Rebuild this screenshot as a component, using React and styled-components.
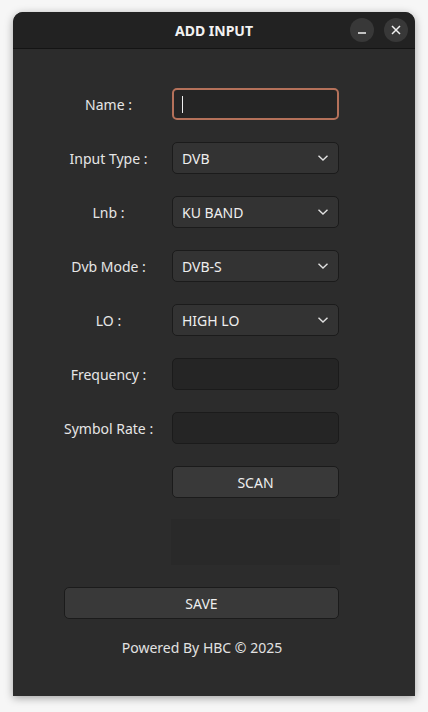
import React from "react";
import styled, { createGlobalStyle } from "styled-components";

const Global = createGlobalStyle`
  html, body {
    margin: 0;
    background: #f6f6f6;
    font-family: "Noto Sans", "Open Sans", sans-serif;
  }
`;

const Page = styled.div`
  padding: 12px 13px 16px 13px;
`;

const Window = styled.div`
  width: 402px;
  height: 684px;
  background: #2c2c2c;
  border-radius: 10px 10px 0 0;
  box-shadow: 0 2px 8px rgba(0, 0, 0, 0.35);
  display: flex;
  flex-direction: column;
  overflow: hidden;
`;

const TitleBar = styled.div`
  height: 36px;
  background: #222222;
  border-bottom: 1px solid #141414;
  display: grid;
  grid-template-columns: 1fr auto 1fr;
  align-items: center;
  padding: 0 7px;
`;

const Title = styled.div`
  grid-column: 2;
  color: #f2f2f2;
  font-weight: 700;
  font-size: 14px;
`;

const Controls = styled.div`
  grid-column: 3;
  justify-self: end;
  display: flex;
  gap: 10px;
`;

const RoundButton = styled.div`
  width: 24px;
  height: 24px;
  border-radius: 50%;
  background: #383838;
  display: flex;
  align-items: center;
  justify-content: center;
`;

const Form = styled.div`
  display: grid;
  grid-template-columns: 89px 167px;
  column-gap: 19px;
  row-gap: 22px;
  padding: 39px 0 0 51px;
  align-items: center;
`;

const Label = styled.div`
  color: #e6e6e6;
  font-size: 14px;
  text-align: center;
  white-space: nowrap;
`;

const Field = styled.div`
  grid-column: ${p => (p.wide ? "1 / 3" : "2")};
  height: 32px;
  box-sizing: border-box;
  border-radius: 5px;
  border: ${p => (p.focus ? "2px solid #b5715a" : "1px solid #1b1b1b")};
  background: ${p => (p.kind === "input" ? "#252525" : p.kind === "button" ? "#393939" : "#333333")};
  color: #eeeeee;
  font-size: 14px;
  display: flex;
  align-items: center;
  justify-content: ${p => (p.kind === "button" ? "center" : "space-between")};
  padding: ${p => (p.focus ? "0 8px" : "0 9px")};
`;

const Caret = styled.div`
  width: 1px;
  height: 17px;
  background: #f0f0f0;
`;

const Status = styled.div`
  grid-column: 2;
  height: 46px;
  margin: -1px -1px 0 -1px;
  background: #292929;
`;

const Footer = styled.div`
  text-align: center;
  color: #e2e2e2;
  font-size: 14px;
  padding: 19px 0 0 0;
  margin-left: -24px;
`;

const Chevron = () => (
  <svg width="12" height="8" viewBox="0 0 12 8">
    <path d="M1.5 1.8 L6 6 L10.5 1.8" fill="none" stroke="#e0e0e0" strokeWidth="1.4" />
  </svg>
);

const Select = ({ label, value }) => (
  <>
    <Label>{label}</Label>
    <Field kind="select">
      <span>{value}</span>
      <Chevron />
    </Field>
  </>
);

export default function App() {
  return (
    <Page>
      <Global />
      <Window>
        <TitleBar>
          <Title>ADD INPUT</Title>
          <Controls>
            <RoundButton>
              <svg width="10" height="10" viewBox="0 0 10 10">
                <path d="M1 8 H9" stroke="#f0f0f0" strokeWidth="1.4" />
              </svg>
            </RoundButton>
            <RoundButton>
              <svg width="10" height="10" viewBox="0 0 10 10">
                <path d="M1 1 L9 9 M9 1 L1 9" stroke="#f0f0f0" strokeWidth="1.5" />
              </svg>
            </RoundButton>
          </Controls>
        </TitleBar>
        <Form>
          <Label>Name :</Label>
          <Field kind="input" focus>
            <Caret />
          </Field>
          <Select label="Input Type :" value="DVB" />
          <Select label="Lnb :" value="KU BAND" />
          <Select label="Dvb Mode :" value="DVB-S" />
          <Select label="LO :" value="HIGH LO" />
          <Label>Frequency :</Label>
          <Field kind="input" />
          <Label>Symbol Rate :</Label>
          <Field kind="input" />
          <Field kind="button">SCAN</Field>
          <Status />
          <Field kind="button" wide>SAVE</Field>
        </Form>
        <Footer>Powered By HBC © 2025</Footer>
      </Window>
    </Page>
  );
}
